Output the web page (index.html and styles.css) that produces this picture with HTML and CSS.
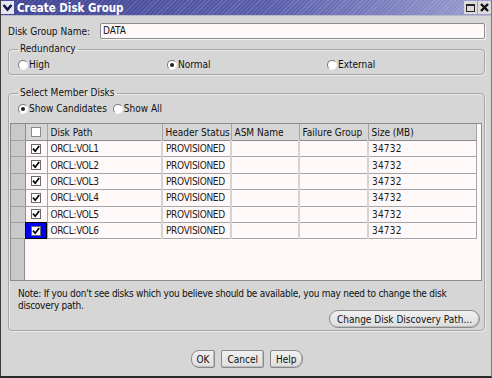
FILE: index.html
```html
<!DOCTYPE html>
<html lang="en">

<head>
	<meta charset="UTF-8">
	<title>Create Disk Group</title>
	<link rel="stylesheet" href="styles.css">
</head>

<body>
	<div class="window">

		<div class="titlebar">
			<span class="menu-btn">
				<svg width="13" height="13" viewBox="0 0 13 13"><path d="M2.5 4 L6.5 8.5 L10.5 4" fill="none" stroke="#14164a" stroke-width="2.6"/></svg>
			</span>
			<span class="title">Create Disk Group</span>
			<span class="tb-btn">
				<svg width="13" height="13" viewBox="0 0 13 13"><rect x="2.5" y="3.5" width="8" height="7" fill="none" stroke="#222" stroke-width="1"/><rect x="2.5" y="3" width="8" height="2" fill="#222"/></svg>
			</span>
			<span class="tb-btn">
				<svg width="13" height="13" viewBox="0 0 13 13"><path d="M3 3 L10 10 M10 3 L3 10" stroke="#111" stroke-width="2.4"/></svg>
			</span>
		</div>

		<div class="content">

			<div class="name-row">
				<label>Disk Group Name:</label>
				<div class="field">DATA</div>
			</div>

			<fieldset class="group redundancy">
				<legend>Redundancy</legend>
				<div class="radios spread">
					<span class="radio-item"><i class="radio"></i>High</span>
					<span class="radio-item"><i class="radio on"></i>Normal</span>
					<span class="radio-item"><i class="radio"></i>External</span>
				</div>
			</fieldset>

			<fieldset class="group members">
				<legend>Select Member Disks</legend>
				<div class="radios">
					<span class="radio-item"><i class="radio on"></i>Show Candidates</span>
					<span class="radio-item"><i class="radio"></i>Show All</span>
				</div>

				<div class="pane">
					<table class="disks">
						<colgroup>
							<col class="c-rh">
							<col class="c-cb">
							<col class="c-path">
							<col class="c-status">
							<col class="c-asm">
							<col class="c-fail">
							<col class="c-size">
						</colgroup>
						<thead>
							<tr>
								<th class="rh"></th>
								<th class="cb-cell">
									<svg width="10" height="10" viewBox="0 0 10 10"><rect x="0.5" y="0.5" width="9" height="9" fill="#fff" stroke="#8a8a8a"/></svg>
								</th>
								<th>Disk Path</th>
								<th>Header Status</th>
								<th>ASM Name</th>
								<th>Failure Group</th>
								<th>Size (MB)</th>
							</tr>
						</thead>
						<tbody>
							<tr>
								<td class="rh"></td>
								<td class="cb-cell"><svg width="10" height="10" viewBox="0 0 10 10"><rect x="0.5" y="0.5" width="9" height="9" fill="#fff" stroke="#6a6a6a"/><path d="M2 4.6 L4.2 7.2 L8.2 2" fill="none" stroke="#000" stroke-width="1.7"/></svg></td>
								<td>ORCL:VOL1</td>
								<td>PROVISIONED</td>
								<td></td>
								<td></td>
								<td>34732</td>
							</tr>
							<tr>
								<td class="rh"></td>
								<td class="cb-cell"><svg width="10" height="10" viewBox="0 0 10 10"><rect x="0.5" y="0.5" width="9" height="9" fill="#fff" stroke="#6a6a6a"/><path d="M2 4.6 L4.2 7.2 L8.2 2" fill="none" stroke="#000" stroke-width="1.7"/></svg></td>
								<td>ORCL:VOL2</td>
								<td>PROVISIONED</td>
								<td></td>
								<td></td>
								<td>34732</td>
							</tr>
							<tr>
								<td class="rh"></td>
								<td class="cb-cell"><svg width="10" height="10" viewBox="0 0 10 10"><rect x="0.5" y="0.5" width="9" height="9" fill="#fff" stroke="#6a6a6a"/><path d="M2 4.6 L4.2 7.2 L8.2 2" fill="none" stroke="#000" stroke-width="1.7"/></svg></td>
								<td>ORCL:VOL3</td>
								<td>PROVISIONED</td>
								<td></td>
								<td></td>
								<td>34732</td>
							</tr>
							<tr>
								<td class="rh"></td>
								<td class="cb-cell"><svg width="10" height="10" viewBox="0 0 10 10"><rect x="0.5" y="0.5" width="9" height="9" fill="#fff" stroke="#6a6a6a"/><path d="M2 4.6 L4.2 7.2 L8.2 2" fill="none" stroke="#000" stroke-width="1.7"/></svg></td>
								<td>ORCL:VOL4</td>
								<td>PROVISIONED</td>
								<td></td>
								<td></td>
								<td>34732</td>
							</tr>
							<tr>
								<td class="rh"></td>
								<td class="cb-cell"><svg width="10" height="10" viewBox="0 0 10 10"><rect x="0.5" y="0.5" width="9" height="9" fill="#fff" stroke="#6a6a6a"/><path d="M2 4.6 L4.2 7.2 L8.2 2" fill="none" stroke="#000" stroke-width="1.7"/></svg></td>
								<td>ORCL:VOL5</td>
								<td>PROVISIONED</td>
								<td></td>
								<td></td>
								<td>34732</td>
							</tr>
							<tr>
								<td class="rh"></td>
								<td class="cb-cell selected"><svg width="10" height="10" viewBox="0 0 10 10"><rect x="0.5" y="0.5" width="9" height="9" fill="#fff" stroke="#6a6a6a"/><path d="M2 4.6 L4.2 7.2 L8.2 2" fill="none" stroke="#000" stroke-width="1.7"/></svg></td>
								<td>ORCL:VOL6</td>
								<td>PROVISIONED</td>
								<td></td>
								<td></td>
								<td>34732</td>
							</tr>
						</tbody>
					</table>
				</div>

				<p class="note">Note: If you don't see disks which you believe should be available, you may need to change the disk<br>discovery path.</p>
				<div class="note-actions">
					<button class="btn pill">Change Disk Discovery Path...</button>
				</div>
			</fieldset>

			<div class="actions">
				<button class="btn first">OK</button>
				<button class="btn">Cancel</button>
				<button class="btn last">Help</button>
			</div>

		</div>

	</div>
</body>

</html>
```

FILE: styles.css
```css
body {
	margin: 0;
	font-family: "DejaVu Sans Condensed", "DejaVu Sans", sans-serif;
	font-size: 10px;
	color: #111;
}

.window {
	width: 492px;
	height: 378px;
	box-sizing: border-box;
	display: flex;
	flex-direction: column;
	border-left: 1px solid #3c3c3c;
	border-right: 1px solid #7a7a7a;
	border-bottom: 2px solid #2a2a2a;
	background: repeating-conic-gradient(#d3d3d3 0 25%, #d9d9d9 0 50%) 0 0 / 2px 2px;
}

/* title bar */

.titlebar {
	height: 15px;
	display: flex;
	align-items: center;
	border-bottom: 1px solid #b8b8c8;
	background:
		repeating-linear-gradient(135deg, rgba(255, 255, 255, 0.13) 0 1px, transparent 1px 3px),
		linear-gradient(to right, #3e4292, #5b5fab 55%, #9a9dd0);
}

.menu-btn {
	width: 13px;
	height: 13px;
	margin: 0 3px 0 0;
	background: #e6e6ee;
	display: flex;
}

.title {
	flex: 1;
	color: #fff;
	font-weight: bold;
	font-size: 11.5px;
}

.tb-btn {
	width: 13px;
	height: 13px;
	margin-left: 1px;
	background: #dcdcdc;
	display: flex;
}

/* content */

.content {
	flex: 1;
	display: flex;
	flex-direction: column;
	padding: 7px 6px 0 7px;
}

.name-row {
	display: flex;
	align-items: center;
	gap: 10px;
}

.field {
	flex: 1;
	height: 14px;
	line-height: 14px;
	padding-left: 2px;
	border: 1px solid #8c8c8c;
	border-radius: 2px;
	background: #fff8f8;
	box-shadow: 1px 1px 0 #f4f4f4;
}

.group {
	margin: 4px 0 0;
	padding: 0 2px 2px 1px;
	border: 1px solid #a6a6a6;
	border-radius: 4px;
	box-shadow: inset 1px 1px 0 #ececec, 1px 1px 0 #ececec;
}

.group legend {
	margin-left: 8px;
	padding: 0 2px;
	line-height: 12px;
}

.redundancy {
	padding-bottom: 3px;
}

.redundancy .radios {
	margin-top: 3px;
}

.members {
	margin-top: 12px;
}

.radios {
	display: flex;
	gap: 6px;
	margin: 3px 0 0 8px;
	height: 13px;
	align-items: center;
}

.radios.spread {
	display: grid;
	grid-template-columns: 149px 160px auto;
	gap: 0;
}

.radio-item {
	display: flex;
	align-items: center;
	gap: 1px;
}

.radio {
	width: 8px;
	height: 8px;
	border-radius: 50%;
	border: 1px solid #8a8a8a;
	border-color: #7a7a7a #f4f4f4 #f4f4f4 #7a7a7a;
	background: #fff;
	display: flex;
	align-items: center;
	justify-content: center;
}

.radio.on::after {
	content: "";
	width: 4px;
	height: 4px;
	border-radius: 50%;
	background: #222;
}

/* table */

.pane {
	margin: 8px 0 0 0;
	height: 156px;
	border: 1px solid #8c8c8c;
	background: linear-gradient(to right, #c9c9c9 0 13px, #8e8e8e 13px 14px, #fff8f8 14px);
}

.disks {
	width: 465px;
	table-layout: fixed;
	border-collapse: collapse;
}

.c-rh {
	width: 14px;
}

.c-cb {
	width: 22px;
}

.c-path {
	width: 115px;
}

.c-status {
	width: 69px;
}

.c-asm {
	width: 68px;
}

.c-fail {
	width: 69px;
}

.c-size {
	width: 108px;
}

.disks th {
	height: 16px;
	padding: 0 0 0 3px;
	text-align: left;
	font-weight: normal;
	background: #d6d6d6;
	border-right: 1px solid #a4a4a4;
	border-bottom: 1px solid #8a8a8a;
	white-space: nowrap;
}

.disks td {
	height: 15.4px;
	padding: 0 0 0 3px;
	background: #fff8f8;
	border-right: 2px solid #d6d2d2;
	border-bottom: 1px solid #a6a6a6;
	white-space: nowrap;
	color: #1a1a1a;
	letter-spacing: -0.3px;
}

.disks td:last-child {
	border-right: 1px solid #a6a6a6;
	letter-spacing: 0.2px;
}

.disks .rh {
	padding: 0;
	background: #c9c9c9;
	border-right: 1px solid #8e8e8e;
	border-bottom: 1px solid #a2a2a2;
}

.disks .cb-cell {
	padding: 0;
	text-align: center;
	line-height: 0;
}

.disks td.cb-cell {
	border-right: 1px solid #a6a6a6;
}

.disks td.selected {
	background: #0000f6;
	outline: 1px solid #000;
	outline-offset: -1px;
}

/* note and buttons */

.note {
	margin: 7px 0 0 8px;
	line-height: 12px;
	letter-spacing: -0.25px;
}

.note-actions {
	display: flex;
	justify-content: flex-end;
	margin: -2px 2px 0 0;
}

.btn {
	font: inherit;
	color: #111;
	height: 18px;
	padding: 0 5px;
	border: 1px solid #8a8a8a;
	border-radius: 2px;
	background: linear-gradient(#f0f0f0, #dedede);
	box-shadow: inset -1px -1px 0 #bcbcbc;
}

.btn.pill {
	border-radius: 9px;
	padding: 0 7px;
}

.btn.first {
	border-radius: 8px 2px 2px 8px;
}

.btn.last {
	border-radius: 2px 8px 8px 2px;
}

.actions {
	display: flex;
	justify-content: center;
	gap: 6px;
	margin-top: 19px;
}
```
